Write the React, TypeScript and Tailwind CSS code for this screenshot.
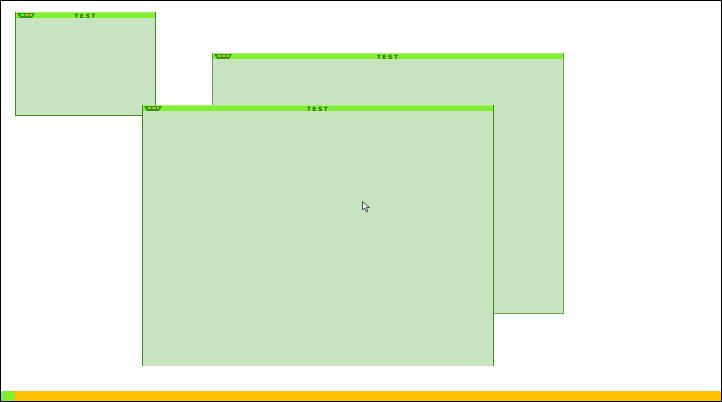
import React from 'react';

interface WinProps {
  left: number;
  top: number;
  width: number;
  height: number;
  title: string;
  cut?: boolean;
  edge?: string;
}

// small tab in the top-left corner of every window
const WinTab = () => (
  <svg width="18" height="5" viewBox="0 0 18 5" className="absolute left-[1px] top-0">
    <path d="M0 0 H18 L15 5 H3 Z" fill="#2f9a12" />
    <rect x="4" y="1" width="3" height="2" fill="#7ee43a" />
    <rect x="8" y="1" width="4" height="2" fill="#e0a020" />
    <rect x="13" y="1" width="2" height="2" fill="#7ee43a" />
  </svg>
);

const Win: React.FC<WinProps> = ({ left, top, width, height, title, cut, edge }) => {
  return (
    <div
      className={`absolute flex flex-col bg-[#c7e3c0] border-x ${edge ?? 'border-[#3f8a22]'} ${cut ? '' : 'border-b'}`}
      style={{ left, top, width, height }}
    >
      <div className="relative h-[6px] bg-[#80f030] border-t border-[#a8f070] flex items-center justify-center">
        <WinTab />
        <span
          className="text-[6px] leading-none tracking-[1.5px] text-[#2f6a18] font-bold"
          style={{ fontFamily: '"DejaVu Sans", sans-serif' }}
        >
          {title}
        </span>
      </div>
      <div className="flex-1" />
    </div>
  );
};

const Cursor = () => (
  <svg width="10" height="12" viewBox="0 0 10 12" className="absolute left-[361px] top-[200px]">
    <path d="M0.5 0.5 V9 L2.5 7 L4.5 11 L6 10.3 L4.2 6.5 H7.5 Z" fill="#e8ece8" stroke="#505050" strokeWidth="1" />
  </svg>
);

export default function App() {
  return (
    <div className="w-[722px] h-[402px] bg-white border border-black flex flex-col overflow-hidden">
      <div className="relative flex-1">
        <Win left={14} top={11} width={141} height={104} title="TEST" />
        <Win left={211} top={52} width={352} height={261} title="TEST" edge="border-[#6aa850]" />
        <Win left={141} top={104} width={352} height={261} title="TEST" cut />
        <Cursor />
      </div>
      <div className="relative h-[10px] bg-[#ffc000]">
        <svg width="15" height="10" viewBox="0 0 15 10" className="absolute left-0 top-0">
          <path d="M0 0 H10 L15 5 L10 10 H0 Z" fill="#80f030" />
        </svg>
      </div>
    </div>
  );
}
